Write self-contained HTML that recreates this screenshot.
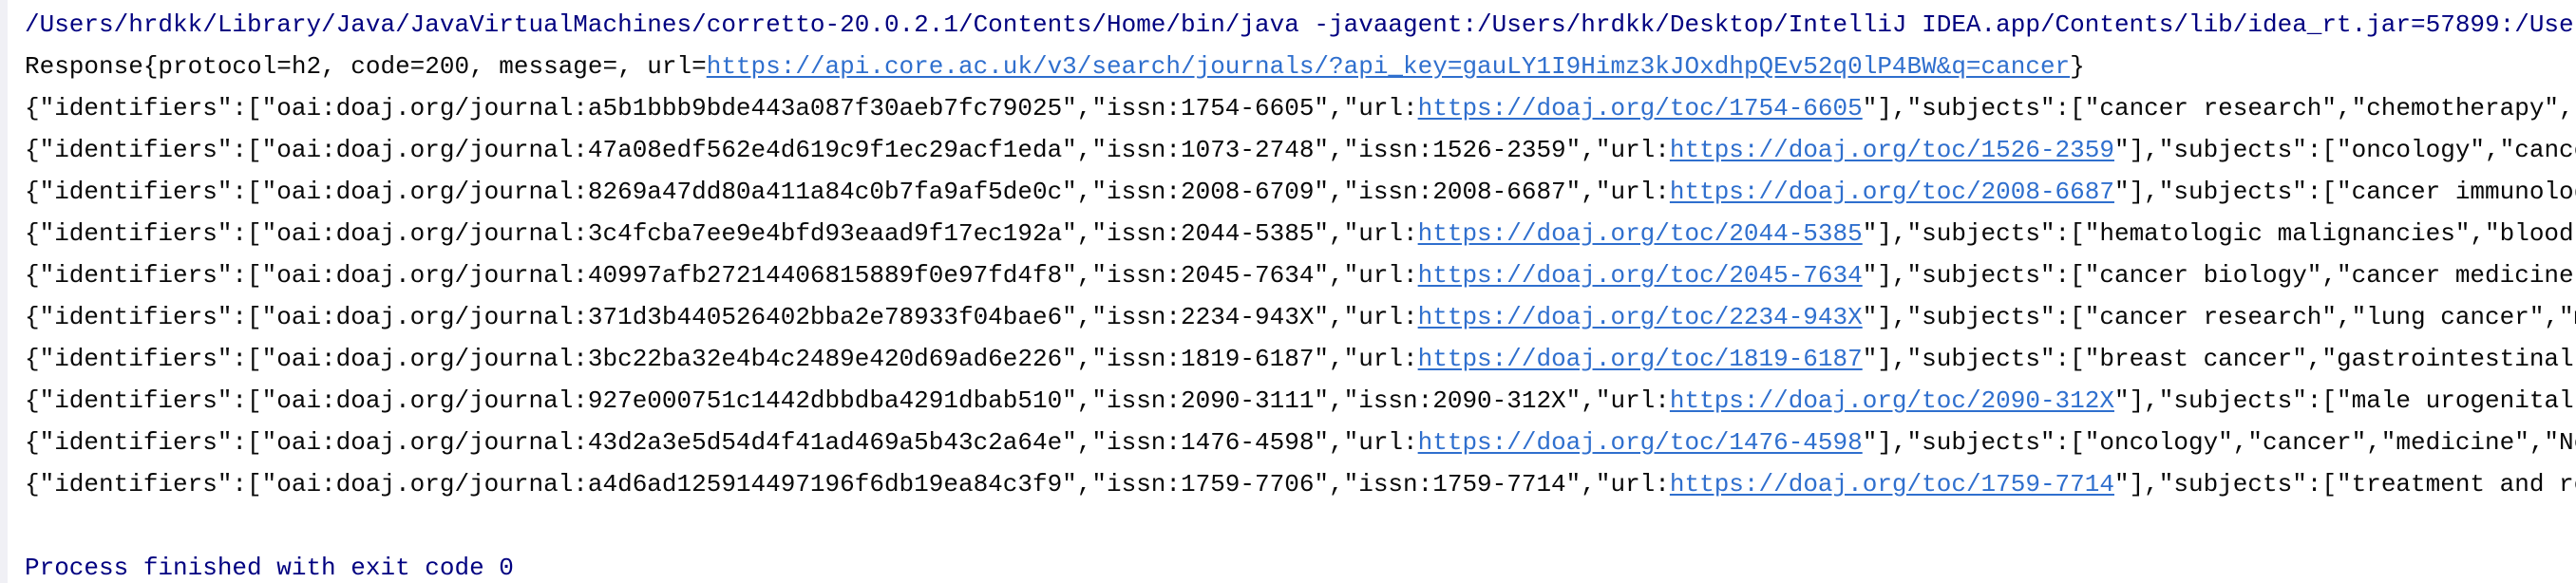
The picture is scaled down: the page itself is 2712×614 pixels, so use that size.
<!DOCTYPE html>
<html><head><meta charset="utf-8">
<style>
html,body{margin:0;padding:0;background:#fff;}
body{width:2712px;height:614px;overflow:hidden;position:relative;}
.strip{position:absolute;left:0;top:0;width:8px;height:614px;background:#f0f0f5;}
pre{margin:0;position:absolute;left:26px;top:4px;width:2686px;height:610px;overflow:hidden;font-family:"Liberation Mono",monospace;font-size:26px;line-height:44px;color:#080808;white-space:pre;}
.n{color:#000080;}
a{color:#2f6fce;text-decoration:underline;text-underline-offset:3px;}
</style></head><body>
<div class="strip"></div>
<pre><span class="n">/Users/hrdkk/Library/Java/JavaVirtualMachines/corretto-20.0.2.1/Contents/Home/bin/java -javaagent:/Users/hrdkk/Desktop/IntelliJ IDEA.app/Contents/lib/idea_rt.jar=57899:/Users/hrdkk/Desktop</span>
Response{protocol=h2, code=200, message=, url=<a>https://api.core.ac.uk/v3/search/journals/?api_key=gauLY1I9Himz3kJOxdhpQEv52q0lP4BW&amp;q=cancer</a>}
{"identifiers":["oai:doaj.org/journal:a5b1bbb9bde443a087f30aeb7fc79025","issn:1754-6605","url:<a>https://doaj.org/toc/1754-6605</a>"],"subjects":["cancer research","chemotherapy","cancer"]}
{"identifiers":["oai:doaj.org/journal:47a08edf562e4d619c9f1ec29acf1eda","issn:1073-2748","issn:1526-2359","url:<a>https://doaj.org/toc/1526-2359</a>"],"subjects":["oncology","cancer"]}
{"identifiers":["oai:doaj.org/journal:8269a47dd80a411a84c0b7fa9af5de0c","issn:2008-6709","issn:2008-6687","url:<a>https://doaj.org/toc/2008-6687</a>"],"subjects":["cancer immunology"]}
{"identifiers":["oai:doaj.org/journal:3c4fcba7ee9e4bfd93eaad9f17ec192a","issn:2044-5385","url:<a>https://doaj.org/toc/2044-5385</a>"],"subjects":["hematologic malignancies","blood cancer"]}
{"identifiers":["oai:doaj.org/journal:40997afb27214406815889f0e97fd4f8","issn:2045-7634","url:<a>https://doaj.org/toc/2045-7634</a>"],"subjects":["cancer biology","cancer medicine","x"]}
{"identifiers":["oai:doaj.org/journal:371d3b440526402bba2e78933f04bae6","issn:2234-943X","url:<a>https://doaj.org/toc/2234-943X</a>"],"subjects":["cancer research","lung cancer","medicine"]}
{"identifiers":["oai:doaj.org/journal:3bc22ba32e4b4c2489e420d69ad6e226","issn:1819-6187","url:<a>https://doaj.org/toc/1819-6187</a>"],"subjects":["breast cancer","gastrointestinal cancer"]}
{"identifiers":["oai:doaj.org/journal:927e000751c1442dbbdba4291dbab510","issn:2090-3111","issn:2090-312X","url:<a>https://doaj.org/toc/2090-312X</a>"],"subjects":["male urogenital diseases"]}
{"identifiers":["oai:doaj.org/journal:43d2a3e5d54d4f41ad469a5b43c2a64e","issn:1476-4598","url:<a>https://doaj.org/toc/1476-4598</a>"],"subjects":["oncology","cancer","medicine","Neoplasms"]}
{"identifiers":["oai:doaj.org/journal:a4d6ad125914497196f6db19ea84c3f9","issn:1759-7706","issn:1759-7714","url:<a>https://doaj.org/toc/1759-7714</a>"],"subjects":["treatment and research"]}

<span class="n">Process finished with exit code 0</span></pre>
</body></html>
